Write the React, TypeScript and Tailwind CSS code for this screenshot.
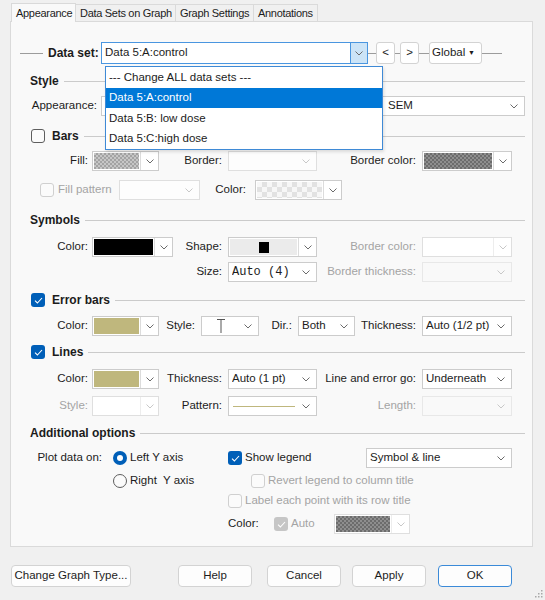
import clsx from "clsx";
import type { ReactNode } from "react";

const rule = "h-px flex-1 bg-[#cbcbcb]";
const connector = "h-px shrink-0 bg-[#9c9c9c]";

const grayChecks =
  "bg-[image:repeating-conic-gradient(#a3a3a3_0_25%,#c6c6c6_0_50%)] bg-[length:4px_4px]";
const darkChecks =
  "bg-[image:repeating-conic-gradient(#6c6c6c_0_25%,#8e8e8e_0_50%)] bg-[length:4px_4px]";
const lightChecks =
  "bg-[image:repeating-conic-gradient(#e2e2e2_0_25%,#f7f7f7_0_50%)] bg-[length:10px_10px]";

function Chevron({ dim }: { dim?: boolean }) {
  return (
    <svg width="8" height="5" viewBox="0 0 8 5" className="shrink-0">
      <path d="M0.5 0.5L4 4L7.5 0.5" fill="none" stroke={dim ? "#c8c8c8" : "#6b6b6b"} strokeWidth="1" />
    </svg>
  );
}

function Tick() {
  return (
    <svg width="9" height="7" viewBox="0 0 9 7">
      <path d="M1 3.6L3.4 6L8 1" fill="none" stroke="#fff" strokeWidth="1.1" />
    </svg>
  );
}

function Checkbox({ checked, disabled }: { checked?: boolean; disabled?: boolean }) {
  if (checked) {
    return (
      <div
        className={clsx(
          "flex h-[14px] w-[14px] shrink-0 items-center justify-center rounded-[3px]",
          disabled ? "bg-[#c6c6c6]" : "bg-[#005fb8]"
        )}
      >
        <Tick />
      </div>
    );
  }
  return (
    <div
      className={clsx(
        "h-[14px] w-[14px] shrink-0 rounded-[3px] border bg-[#fbfbfb]",
        disabled ? "border-[#d0d0d0]" : "border-[#5e5e5e]"
      )}
    />
  );
}

function Radio({ checked }: { checked?: boolean }) {
  if (checked) {
    return (
      <div className="flex h-[14px] w-[14px] shrink-0 items-center justify-center rounded-full bg-[#005fb8]">
        <div className="h-[6px] w-[6px] rounded-full bg-white" />
      </div>
    );
  }
  return <div className="h-[14px] w-[14px] shrink-0 rounded-full border border-[#5e5e5e] bg-[#fbfbfb]" />;
}

function Lbl({ w, children, dim, pr = "pr-[6px]" }: { w: string; children: ReactNode; dim?: boolean; pr?: string }) {
  return (
    <div className={clsx("shrink-0 whitespace-nowrap text-right", w, pr, dim && "text-[#a4a4a4]")}>{children}</div>
  );
}

function Combo({
  w,
  children,
  disabled,
  faint,
}: {
  w: string;
  children?: ReactNode;
  disabled?: boolean;
  faint?: boolean;
}) {
  return (
    <div
      className={clsx(
        "flex h-[20px] shrink-0 items-center border pl-[3px] pr-[6px] whitespace-nowrap",
        w,
        faint ? "border-[#e8e8e8]" : disabled ? "border-[#dfdfdf] bg-[#fdfdfd]" : "border-[#cccccc] bg-white"
      )}
    >
      <div className="flex flex-1 items-center overflow-hidden">{children}</div>
      <Chevron dim={disabled || faint} />
    </div>
  );
}

function SwatchCombo({ w, fill, disabled, children }: { w: string; fill: string; disabled?: boolean; children?: ReactNode }) {
  return (
    <div className={clsx("flex h-[20px] shrink-0 border bg-white", w, disabled ? "border-[#dfdfdf]" : "border-[#cccccc]")}>
      <div className={clsx("m-px flex flex-1 items-center justify-center", fill)}>{children}</div>
      <div
        className={clsx(
          "flex w-[18px] items-center justify-center border-l",
          disabled ? "border-[#ededed]" : "border-[#dcdcdc]"
        )}
      >
        <Chevron dim={disabled} />
      </div>
    </div>
  );
}

function Section({ title, box, checked }: { title: string; box?: boolean; checked?: boolean }) {
  return (
    <div className="flex h-[20px] items-center pr-[7px]">
      {box ? (
        <div className="flex items-center gap-[7px] pl-[20px]">
          <Checkbox checked={checked} />
          <span className="font-bold text-[12px]">{title}</span>
        </div>
      ) : (
        <span className="pl-[19px] font-bold text-[12px]">{title}</span>
      )}
      <div className={clsx(rule, "ml-[5px]")} />
    </div>
  );
}

function Row({ children, className }: { children: ReactNode; className?: string }) {
  return <div className={clsx("flex h-[20px] items-center", className)}>{children}</div>;
}

function SmallButton({ w, children }: { w: string; children: ReactNode }) {
  return (
    <div
      className={clsx(
        "flex h-[22px] shrink-0 items-center rounded-[3px] border border-[#d3d3d3] bg-white",
        w
      )}
    >
      {children}
    </div>
  );
}

function DialogButton({ w, children, primary }: { w: string; children: ReactNode; primary?: boolean }) {
  return (
    <div
      className={clsx(
        "flex h-[22px] shrink-0 items-center justify-center rounded-[4px] border bg-[#fdfdfd]",
        w,
        primary ? "border-[#3b8ad8]" : "border-[#d3d3d3]"
      )}
    >
      {children}
    </div>
  );
}

const tabs = [
  { name: "Data Sets on Graph", w: "w-[100px]" },
  { name: "Graph Settings", w: "w-[78px]" },
  { name: "Annotations", w: "w-[64px]" },
];

const dataSets = ["--- Change ALL data sets ---", "Data 5:A:control", "Data 5:B: low dose", "Data 5:C:high dose"];

export default function App() {
  return (
    <div className="relative h-[600px] w-[545px] overflow-hidden bg-[#f0f0f0] font-['Liberation_Sans',Arial,sans-serif] text-[11.5px] text-[#1c1c1c]">
      {/* tab strip */}
      <div className="relative z-10 flex h-[22px] items-end pl-[11px] text-[11px] tracking-[-0.3px]">
        <div className="flex h-[19px] w-[65px] items-center border-l border-r border-t border-[#d9d9d9] bg-[#f9f9f9] pl-[4px]">
          Appearance
        </div>
        {tabs.map((t) => (
          <div
            key={t.name}
            className={clsx(
              "mb-px flex h-[17px] items-center border-r border-t border-[#dadada] pl-[4px] whitespace-nowrap",
              t.w
            )}
          >
            {t.name}
          </div>
        ))}
      </div>

      {/* panel */}
      <div className="relative -mt-px ml-[10px] h-[526px] w-[523px] border border-[#dadada] bg-[#f9f9f9] pt-[20px]">
        <div className="flex h-[22px] items-center">
          <div className={clsx(connector, "ml-[9px] w-[23px]")} />
          <div className="w-[58px] shrink-0 pl-[5px] font-bold text-[12px]">Data set:</div>
          <div className="flex h-[22px] w-[267px] shrink-0 items-center border border-[#4a96e0] bg-white">
            <span className="flex-1 pl-[3px]">Data 5:A:control</span>
            <div className="flex h-full w-[17px] items-center justify-center border-l border-[#4a96e0] bg-[#cce4f7]">
              <Chevron />
            </div>
          </div>
          <div className={clsx(connector, "w-[8px]")} />
          <SmallButton w="w-[19px] justify-center">&lt;</SmallButton>
          <div className={clsx(connector, "w-[5px]")} />
          <SmallButton w="w-[19px] justify-center">&gt;</SmallButton>
          <div className={clsx(connector, "w-[10px]")} />
          <SmallButton w="w-[53px] justify-between pl-[2px] pr-[6px]">
            <span>Global</span>
            <span className="text-[7px]">▼</span>
          </SmallButton>
          <div className={clsx(connector, "w-[20px]")} />
        </div>

        <div className="mt-[7px]">
          <Section title="Style" />
        </div>
        <Row className="mt-[5px]">
          <Lbl w="w-[90px]" pr="pr-[4px]">Appearance:</Lbl>
          <Combo w="w-[424px]">
            <span className="w-[283px] shrink-0 overflow-hidden">Mean and error bars: Mean with</span>
            <span>SEM</span>
          </Combo>
        </Row>

        <div className="mt-[10px]">
          <Section title="Bars" box />
        </div>
        <Row className="mt-[5px]">
          <Lbl w="w-[81px]" pr="pr-[4px]">Fill:</Lbl>
          <SwatchCombo w="w-[67px]" fill={grayChecks} />
          <Lbl w="w-[69px]">Border:</Lbl>
          <Combo w="w-[89px]" disabled />
          <Lbl w="w-[105px]">Border color:</Lbl>
          <SwatchCombo w="w-[90px]" fill={darkChecks} />
        </Row>
        <Row className="mt-[9px]">
          <div className="flex w-[108px] shrink-0 items-center gap-[4px] pl-[29px] text-[#a4a4a4]">
            <Checkbox disabled />
            <span>Fill pattern</span>
          </div>
          <Combo w="w-[81px]" disabled />
          <Lbl w="w-[55px]" pr="pr-[9px]">Color:</Lbl>
          <SwatchCombo w="w-[87px]" fill={lightChecks} />
        </Row>

        <div className="mt-[10px]">
          <Section title="Symbols" />
        </div>
        <Row className="mt-[7px]">
          <Lbl w="w-[81px]" pr="pr-[4px]">Color:</Lbl>
          <SwatchCombo w="w-[81px]" fill="bg-black" />
          <Lbl w="w-[55px]">Shape:</Lbl>
          <SwatchCombo w="w-[89px]" fill="bg-[#ebebeb]">
            <div className="h-[11px] w-[10px] bg-black" />
          </SwatchCombo>
          <Lbl w="w-[105px]" dim>
            Border color:
          </Lbl>
          <SwatchCombo w="w-[90px]" fill="bg-white" disabled />
        </Row>
        <Row className="mt-[5px]">
          <div className="w-[162px] shrink-0" />
          <Lbl w="w-[55px]">Size:</Lbl>
          <Combo w="w-[89px]">
            <span className="font-['Liberation_Mono',monospace] text-[12px]">Auto (4)</span>
          </Combo>
          <Lbl w="w-[105px]" dim>
            Border thickness:
          </Lbl>
          <Combo w="w-[90px]" faint />
        </Row>

        <div className="mt-[8px]">
          <Section title="Error bars" box checked />
        </div>
        <Row className="mt-[6px]">
          <Lbl w="w-[81px]" pr="pr-[4px]">Color:</Lbl>
          <SwatchCombo w="w-[67px]" fill="bg-[#bfb77d]" />
          <Lbl w="w-[42px]">Style:</Lbl>
          <Combo w="w-[58px]">
            <svg width="10" height="16" viewBox="0 0 10 16" className="ml-[11px]">
              <path d="M1 1.5H9M5 1.5V15" fill="none" stroke="#555" strokeWidth="1" />
            </svg>
          </Combo>
          <Lbl w="w-[39px]">Dir.:</Lbl>
          <Combo w="w-[57px]">Both</Combo>
          <Lbl w="w-[67px]">Thickness:</Lbl>
          <Combo w="w-[90px]">Auto (1/2 pt)</Combo>
        </Row>

        <div className="mt-[6px]">
          <Section title="Lines" box checked />
        </div>
        <Row className="mt-[7px]">
          <Lbl w="w-[81px]" pr="pr-[4px]">Color:</Lbl>
          <SwatchCombo w="w-[67px]" fill="bg-[#bfb77d]" />
          <Lbl w="w-[69px]">Thickness:</Lbl>
          <Combo w="w-[89px]">Auto (1 pt)</Combo>
          <Lbl w="w-[105px]">Line and error go:</Lbl>
          <Combo w="w-[90px]">Underneath</Combo>
        </Row>
        <Row className="mt-[7px]">
          <Lbl w="w-[81px]" pr="pr-[4px]" dim>
            Style:
          </Lbl>
          <SwatchCombo w="w-[67px]" fill="bg-white" disabled />
          <Lbl w="w-[69px]">Pattern:</Lbl>
          <Combo w="w-[89px]">
            <div className="ml-[1px] h-px w-[62px] bg-[#bfb77d]" />
          </Combo>
          <Lbl w="w-[105px]" dim>
            Length:
          </Lbl>
          <Combo w="w-[90px]" faint />
        </Row>

        <div className="mt-[7px]">
          <Section title="Additional options" />
        </div>
        <Row className="mt-[5px]">
          <Lbl w="w-[97px]">Plot data on:</Lbl>
          <div className="flex w-[120px] shrink-0 items-center gap-[3px] pl-[5px]">
            <Radio checked />
            <span>Left Y axis</span>
          </div>
          <div className="flex w-[138px] shrink-0 items-center gap-[3px]">
            <Checkbox checked />
            <span>Show legend</span>
          </div>
          <Combo w="w-[146px]">Symbol &amp; line</Combo>
        </Row>
        <Row className="mt-[3px]">
          <div className="w-[97px] shrink-0" />
          <div className="flex w-[143px] shrink-0 items-center gap-[3px] pl-[5px]">
            <Radio />
            <span className="whitespace-pre">Right  Y axis</span>
          </div>
          <div className="flex items-center gap-[3px] text-[#a4a4a4]">
            <Checkbox disabled />
            <span>Revert legend to column title</span>
          </div>
        </Row>
        <Row>
          <div className="w-[217px] shrink-0" />
          <div className="flex items-center gap-[3px] text-[#a4a4a4]">
            <Checkbox disabled />
            <span>Label each point with its row title</span>
          </div>
        </Row>
        <Row className="mt-[3px]">
          <div className="w-[217px] shrink-0" />
          <span className="w-[46px] shrink-0">Color:</span>
          <div className="flex w-[60px] shrink-0 items-center gap-[3px] text-[#a4a4a4]">
            <Checkbox checked disabled />
            <span>Auto</span>
          </div>
          <SwatchCombo w="w-[76px]" fill={darkChecks} disabled />
        </Row>

        {/* open data set list */}
        <div className="absolute left-[94px] top-[44px] z-20 w-[278px] border border-[#3f8ad6] bg-white shadow-[1px_2px_3px_rgba(0,0,0,0.12)]">
          {dataSets.map((d, i) => (
            <div
              key={d}
              className={clsx("flex h-[20.5px] items-center pl-[3px]", i === 1 && "bg-[#0078d7] text-white")}
            >
              {d}
            </div>
          ))}
        </div>
      </div>

      {/* dialog buttons */}
      <div className="mt-[18px] flex pl-[11px]">
        <DialogButton w="w-[120px]">Change Graph Type...</DialogButton>
        <div className="w-[47px] shrink-0" />
        <DialogButton w="w-[74px]">Help</DialogButton>
        <div className="w-[15px] shrink-0" />
        <DialogButton w="w-[74px]">Cancel</DialogButton>
        <div className="w-[11px] shrink-0" />
        <DialogButton w="w-[74px]">Apply</DialogButton>
        <div className="w-[12px] shrink-0" />
        <DialogButton w="w-[74px]" primary>
          OK
        </DialogButton>
      </div>

      {/* size grip */}
      <svg width="10" height="10" viewBox="0 0 10 10" className="absolute bottom-[2px] right-[2px]">
        {[
          [8, 2],
          [8, 5],
          [5, 5],
          [8, 8],
          [5, 8],
          [2, 8],
        ].map(([x, y]) => (
          <rect key={`${x}-${y}`} x={x} y={y} width="1.5" height="1.5" fill="#a8a8a8" />
        ))}
      </svg>
    </div>
  );
}
